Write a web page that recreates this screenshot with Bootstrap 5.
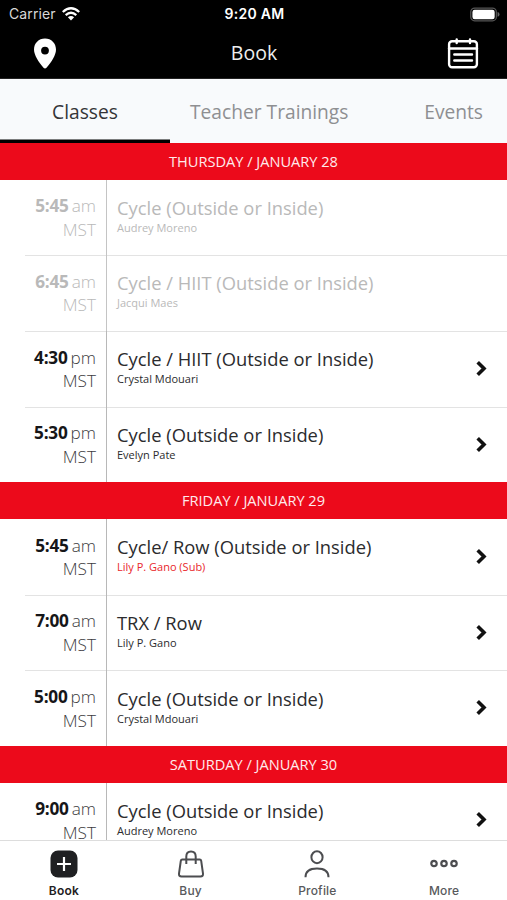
<!DOCTYPE html>
<html lang="en">
<head>
<meta charset="utf-8">
<meta name="viewport" content="width=device-width, initial-scale=1">
<title>Book</title>
<link href="https://cdn.jsdelivr.net/npm/bootstrap@5.3.0/dist/css/bootstrap.min.css" rel="stylesheet">
<style>
body{font-family:"Open Sans","Noto Sans",sans-serif;color:#2b2b2d;background:#fff}
svg{display:block;flex:none}
.app{height:900px;max-width:507px}
.topbar{height:79px;background:#000;border-bottom:1px solid #222}
.status{height:28px;font-family:Inter,"Liberation Sans",sans-serif;font-size:14px;line-height:28px;padding:0 7px 0 9px}
.status .carrier{color:#d8d8d8;letter-spacing:.1px}
.status .clock{font-weight:600;letter-spacing:.3px}
.titlebar{height:50px;padding:0 28px 0 33px}
.titlebar h1{font-size:19.5px;line-height:26px;color:#eee;font-weight:400}
.tabs{height:64px;background:#f8fafc;font-size:19.2px}
.tabs a{color:#8e8f92;line-height:65px;text-decoration:none;white-space:nowrap}
.tabs a.active{color:#343437;width:170px;box-shadow:inset 0 -3.5px #000}
.day{height:36.6px;line-height:36.6px;background:#ec0a1b;color:#ffeaec;font-size:14.6px;letter-spacing:-.01px;font-weight:400;margin:0}
.slot{height:75.7px}
.slot .when{width:107px;padding:14.6px 10px 0 0;border-right:1px solid #b8b8b8;font-size:17.2px;line-height:23.6px;font-weight:300;color:#3c3c3e}
.slot .when b{font-weight:700;color:#161618;letter-spacing:-.2px;margin-right:-1.5px}
.slot .what{padding:16.2px 0 0 10px}
.slot h3{font-size:18.35px;line-height:24px;font-weight:400;margin:0}
.slot p{font-size:11px;line-height:16px;margin:0}
.slot + .slot{background:linear-gradient(#e3e3e3,#e3e3e3) 25px 0/100% 1px no-repeat}
.slot .go{margin:28.9px 19.5px 0 auto}
.past,.past .when,.past .when b{color:#b9b9b9!important}
.past .when{border-color:#c4c4c4}
.sub{color:#e9272b}
.bottom-nav{height:60px;background:#fff;border-top:1px solid #ddd;font-family:Inter,sans-serif;font-size:12px;font-weight:500;color:#58595c}
.bottom-nav a{color:inherit;text-decoration:none;padding:9px 0 0 1px;line-height:16px;letter-spacing:.2px}
.bottom-nav a span{margin-top:5px}
.bottom-nav .active{color:#1f2022;font-weight:600}
</style>
<script src="https://cdn.jsdelivr.net/npm/bootstrap@5.3.0/dist/js/bootstrap.bundle.min.js"></script>
</head>
<body>
<svg class="d-none"><symbol id="chev" viewBox="0 0 13 17"><path d="M2.700 2.200 9 8.500 2.700 14.800" fill="none" stroke="#111" stroke-width="3.600"/></symbol></svg>
<div class="app d-flex flex-column overflow-hidden">
<header class="topbar flex-shrink-0 text-white">
 <div class="status d-flex align-items-center">
  <div class="carrier col d-flex align-items-center"><span class="me-1">Carrier</span>
   <svg style="margin-left:2px" width="18" height="14" viewBox="0 0 18 14" fill="none" stroke="#fff" stroke-width="2.300"><path d="M.8 5Q9-2.400 17.200 5M3.700 8.100Q9 3.300 14.300 8.100"/><path d="M9 13.600 5.900 10.300Q9 7.700 12.100 10.300Z" fill="#fff" stroke="none"/></svg></div>
  <div class="clock">9:20 AM</div>
  <div class="col d-flex justify-content-end"><svg width="30" height="15" viewBox="0 0 31 15"><rect x=".8" y=".8" width="26.400" height="13.200" rx="4" fill="none" stroke="#555" stroke-width="1.300"/><rect x="2.500" y="2.500" width="23" height="9.800" rx="2.300" fill="#fff"/><path d="M28.500 5Q30.500 5.500 30.500 7.400T28.500 9.800Z" fill="#666"/></svg></div>
 </div>
 <div class="titlebar d-flex align-items-center justify-content-between">
  <svg width="24" height="31" viewBox="0 0 24 31"><path fill="#fff" fill-rule="evenodd" d="M12 .5C5.600.5 1 5.200 1 11.500 1 17 5.500 24 10.500 29.800Q12 31.200 13.500 29.800C18.500 24 23 17 23 11.500 23 5.200 18.400.5 12 .5ZM12 8.700a3.900 3.900 0 1 0 0 7.800 3.900 3.900 0 0 0 0-7.800Z"/></svg>
  <h1 class="m-0 ps-1">Book</h1>
  <svg width="32" height="31" viewBox="0 0 32 31" fill="none" stroke="#fff" stroke-width="2.400" stroke-linecap="round"><rect x="2.100" y="3.200" width="27.800" height="26" rx="3"/><path d="M2 10.500H30M9.700 1.500V5M23 1.500V5M7.300 16.500H25M7.300 22.500H25"/></svg>
 </div>
</header>
<nav class="tabs d-flex flex-shrink-0"><a href="#" class="active text-center">Classes</a><a href="#" class="ms-3 ps-1">Teacher Trainings</a><a href="#" class="ms-auto me-4">Events</a></nav>
<main class="flex-fill overflow-hidden">
 <h2 class="day text-center">THURSDAY / JANUARY 28</h2>
 <div class="slot past d-flex"><div class="when text-end"><b>5:45</b> am<br>MST</div><div class="what"><h3>Cycle (Outside or Inside)</h3><p>Audrey Moreno</p></div></div>
 <div class="slot past d-flex"><div class="when text-end"><b>6:45</b> am<br>MST</div><div class="what"><h3>Cycle / HIIT (Outside or Inside)</h3><p>Jacqui Maes</p></div></div>
 <div class="slot d-flex"><div class="when text-end"><b>4:30</b> pm<br>MST</div><div class="what"><h3>Cycle / HIIT (Outside or Inside)</h3><p>Crystal Mdouari</p></div><svg class="go" width="13" height="17"><use href="#chev"/></svg></div>
 <div class="slot d-flex"><div class="when text-end"><b>5:30</b> pm<br>MST</div><div class="what"><h3>Cycle (Outside or Inside)</h3><p>Evelyn Pate</p></div><svg class="go" width="13" height="17"><use href="#chev"/></svg></div>
 <h2 class="day text-center">FRIDAY / JANUARY 29</h2>
 <div class="slot d-flex"><div class="when text-end"><b>5:45</b> am<br>MST</div><div class="what"><h3>Cycle/ Row (Outside or Inside)</h3><p class="sub">Lily P. Gano (Sub)</p></div><svg class="go" width="13" height="17"><use href="#chev"/></svg></div>
 <div class="slot d-flex"><div class="when text-end"><b>7:00</b> am<br>MST</div><div class="what"><h3>TRX / Row</h3><p>Lily P. Gano</p></div><svg class="go" width="13" height="17"><use href="#chev"/></svg></div>
 <div class="slot d-flex"><div class="when text-end"><b>5:00</b> pm<br>MST</div><div class="what"><h3>Cycle (Outside or Inside)</h3><p>Crystal Mdouari</p></div><svg class="go" width="13" height="17"><use href="#chev"/></svg></div>
 <h2 class="day text-center">SATURDAY / JANUARY 30</h2>
 <div class="slot d-flex"><div class="when text-end"><b>9:00</b> am<br>MST</div><div class="what"><h3>Cycle (Outside or Inside)</h3><p>Audrey Moreno</p></div><svg class="go" width="13" height="17"><use href="#chev"/></svg></div>
</main>
<nav class="bottom-nav row g-0 flex-shrink-0">
 <a href="#" class="col d-flex flex-column align-items-center active"><svg width="28" height="28" viewBox="0 0 28 28"><rect x=".5" y=".5" width="27" height="27" rx="7.500" fill="#1f2022"/><path d="M14 7V21M7 14H21" stroke="#fff" stroke-width="2.200"/></svg><span>Book</span></a>
 <a href="#" class="col d-flex flex-column align-items-center"><svg width="28" height="28" viewBox="0 0 28 28" fill="none" stroke="#4c4d50" stroke-width="2"><path d="M5.300 9.500H22.700Q24 9.500 24.200 10.800L26 23.500Q26.300 26.500 23.500 26.500H4.500Q1.700 26.500 2 23.500L3.800 10.800Q4 9.500 5.300 9.500ZM9.300 14V6.500Q9.300 1.500 14 1.500T18.700 6.500V14"/></svg><span>Buy</span></a>
 <a href="#" class="col d-flex flex-column align-items-center"><svg width="28" height="28" viewBox="0 0 28 28" fill="none" stroke="#4c4d50" stroke-width="2"><ellipse cx="14" cy="7.200" rx="5.600" ry="6"/><path d="M2.500 27.300C2.500 21.500 6.500 18.600 14 18.600S25.500 21.500 25.500 27.300"/></svg><span>Profile</span></a>
 <a href="#" class="col d-flex flex-column align-items-center"><svg width="28" height="28" viewBox="0 0 28 28" fill="none" stroke="#4c4d50" stroke-width="2.200"><circle cx="4" cy="13.500" r="2.700"/><circle cx="14" cy="13.500" r="2.700"/><circle cx="24" cy="13.500" r="2.700"/></svg><span>More</span></a>
</nav>
</div>
</body>
</html>
